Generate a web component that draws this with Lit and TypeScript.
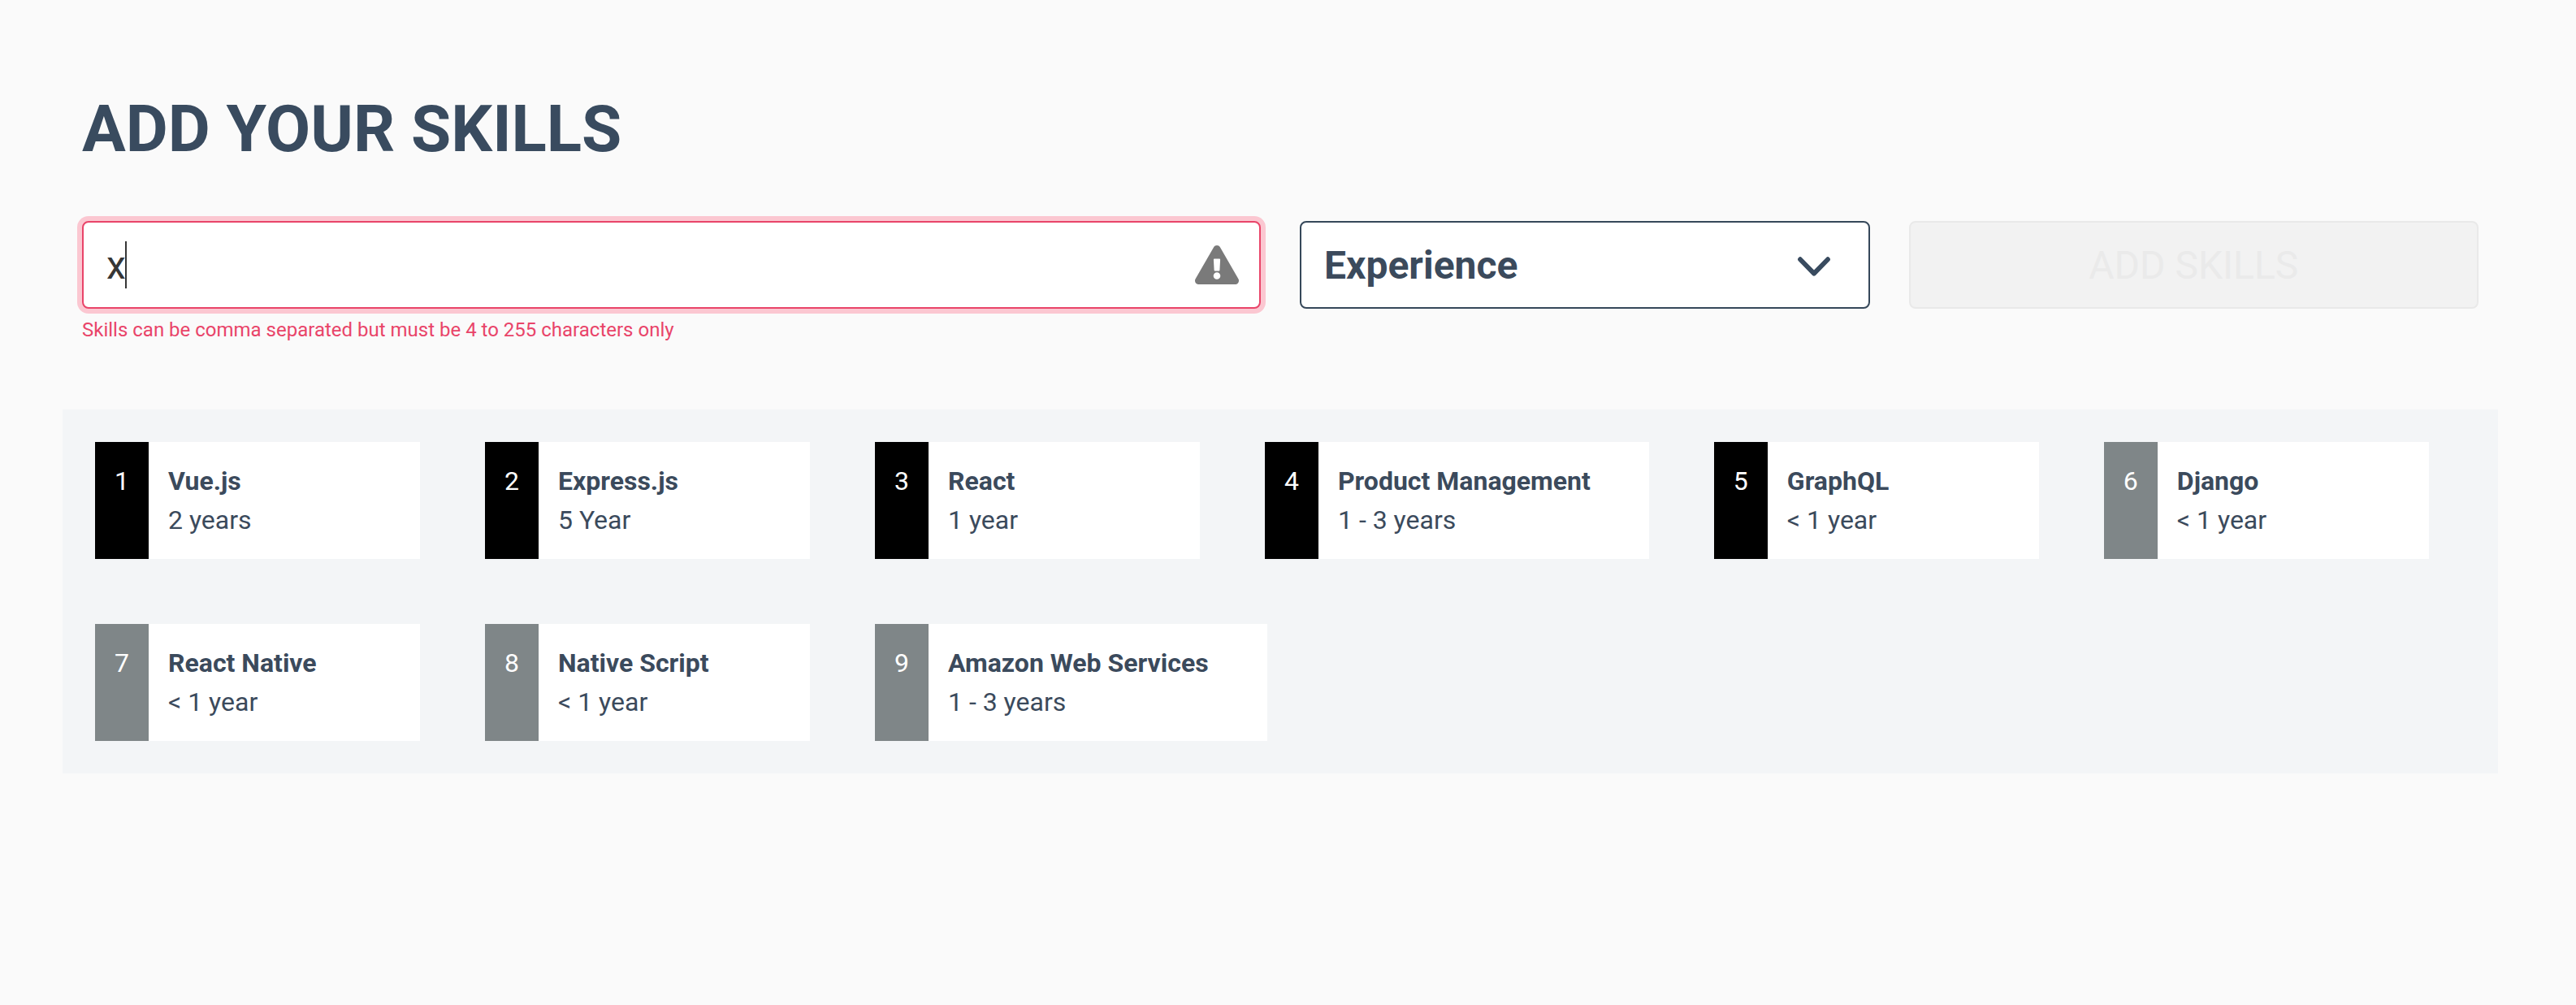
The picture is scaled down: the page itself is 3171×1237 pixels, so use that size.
import { LitElement, html, css } from "lit";
import { customElement, property } from "lit/decorators.js";

interface Skill {
  name: string;
  years: string;
}

const SKILLS: Skill[] = [
  { name: "Vue.js", years: "2 years" },
  { name: "Express.js", years: "5 Year" },
  { name: "React", years: "1 year" },
  { name: "Product Management", years: "1 - 3 years" },
  { name: "GraphQL", years: "< 1 year" },
  { name: "Django", years: "< 1 year" },
  { name: "React Native", years: "< 1 year" },
  { name: "Native Script", years: "< 1 year" },
  { name: "Amazon Web Services", years: "1 - 3 years" },
];

// The first five skills are shown as primary ones.
const PRIMARY_COUNT = 5;

@customElement("skill-card")
class SkillCard extends LitElement {
  @property({ type: Number }) rank = 0;
  @property() name = "";
  @property() years = "";
  @property({ type: Boolean }) primary = false;

  static styles = css`
    :host {
      display: flex;
      min-width: 400px;
      box-sizing: border-box;
      background: #fff;
      color: #3b4a5c;
      font-size: 32px;
      line-height: 48px;
    }
    .rank {
      padding: 24px;
      background: #7f8688;
      color: #fff;
    }
    .primary {
      background: #000;
    }
    .body {
      padding: 24px 72px 24px 24px;
      white-space: nowrap;
    }
    .name {
      font-weight: 700;
    }
  `;

  render() {
    return html`
      <div class="rank ${this.primary ? "primary" : ""}">${this.rank}</div>
      <div class="body">
        <div class="name">${this.name}</div>
        <div>${this.years}</div>
      </div>
    `;
  }
}

@customElement("app-root")
class AppRoot extends LitElement {
  static styles = css`
    :host {
      display: block;
      min-height: 1237px;
      box-sizing: border-box;
      padding: 114px 96px 0 77px;
      background: #fafafa;
      color: #3b4a5c;
      font-family: Roboto, "Liberation Sans", sans-serif;
    }
    .title {
      margin: 0 24px 68px;
      font-size: 80px;
      line-height: 90px;
      font-weight: 700;
      color: #394b5f;
    }
    .form {
      display: grid;
      grid-template-columns: 2fr 1fr 1fr;
      align-items: start;
      height: 232px;
    }
    .column {
      padding: 0 24px;
      min-width: 0;
    }
    .control {
      display: flex;
      align-items: center;
      box-sizing: border-box;
      height: 108px;
      border: 2px solid #36485a;
      border-radius: 8px;
      background: #fff;
      font-size: 48px;
      line-height: 56px;
    }
    .input {
      justify-content: space-between;
      padding: 0 25px 0 28px;
      border-color: #e94469;
      box-shadow: 0 0 0 6px #fbc7d1;
      color: #363636;
    }
    .value {
      display: flex;
      align-items: center;
    }
    .label {
      padding-top: 2px;
    }
    .caret {
      width: 2px;
      height: 58px;
      margin-left: -1px;
      background: #363636;
    }
    .warning {
      width: 54px;
      height: 48px;
      fill: #7a7a7a;
    }
    .error {
      margin-top: 11px;
      color: #e94469;
      font-size: 24px;
      line-height: 30px;
    }
    .select {
      justify-content: space-between;
      padding: 0 45px 0 28px;
      font-weight: 700;
    }
    .chevron {
      width: 44px;
      height: 32px;
      fill: none;
      stroke: #394b5f;
      stroke-width: 5.8;
      stroke-linecap: round;
      stroke-linejoin: round;
    }
    .button {
      justify-content: center;
      border-color: #e9e9e9;
      background: #f2f2f2;
      color: #eaeaea;
    }
    .skills {
      display: flex;
      flex-wrap: wrap;
      gap: 80px;
      padding: 40px;
      background: #f3f5f7;
    }
  `;

  render() {
    return html`
      <h1 class="title">ADD YOUR SKILLS</h1>
      <div class="form">
        <div class="column">
          <div class="control input">
            <span class="value"><span class="label">x</span><span class="caret"></span></span>
            <svg class="warning" viewBox="0 0 576 512">
              <path
                d="M569.517 440.013C587.975 472.007 564.806 512 527.94 512H48.054c-36.937 0-59.999-40.055-41.577-71.987L246.423 23.985c18.467-32.009 64.72-31.951 83.154 0l239.94 416.028zM288 354c-25.405 0-46 20.595-46 46s20.595 46 46 46 46-20.595 46-46-20.595-46-46-46zm-43.673-165.346l7.418 136c.347 6.364 5.609 11.346 11.982 11.346h48.546c6.373 0 11.635-4.982 11.982-11.346l7.418-136c.375-6.874-5.098-12.654-11.982-12.654h-63.383c-6.884 0-12.356 5.78-11.981 12.654z"
              />
            </svg>
          </div>
          <div class="error">Skills can be comma separated but must be 4 to 255 characters only</div>
        </div>
        <div class="column">
          <div class="control select">
            <span class="label">Experience</span>
            <svg class="chevron" viewBox="0 0 44 32">
              <path d="M5 9.2 L22 26.6 L39 9.2" />
            </svg>
          </div>
        </div>
        <div class="column">
          <div class="control button"><span class="label">ADD SKILLS</span></div>
        </div>
      </div>
      <div class="skills">
        ${SKILLS.map(
          (skill, i) => html`<skill-card
            .rank=${i + 1}
            .name=${skill.name}
            .years=${skill.years}
            .primary=${i < PRIMARY_COUNT}
          ></skill-card>`
        )}
      </div>
    `;
  }
}
